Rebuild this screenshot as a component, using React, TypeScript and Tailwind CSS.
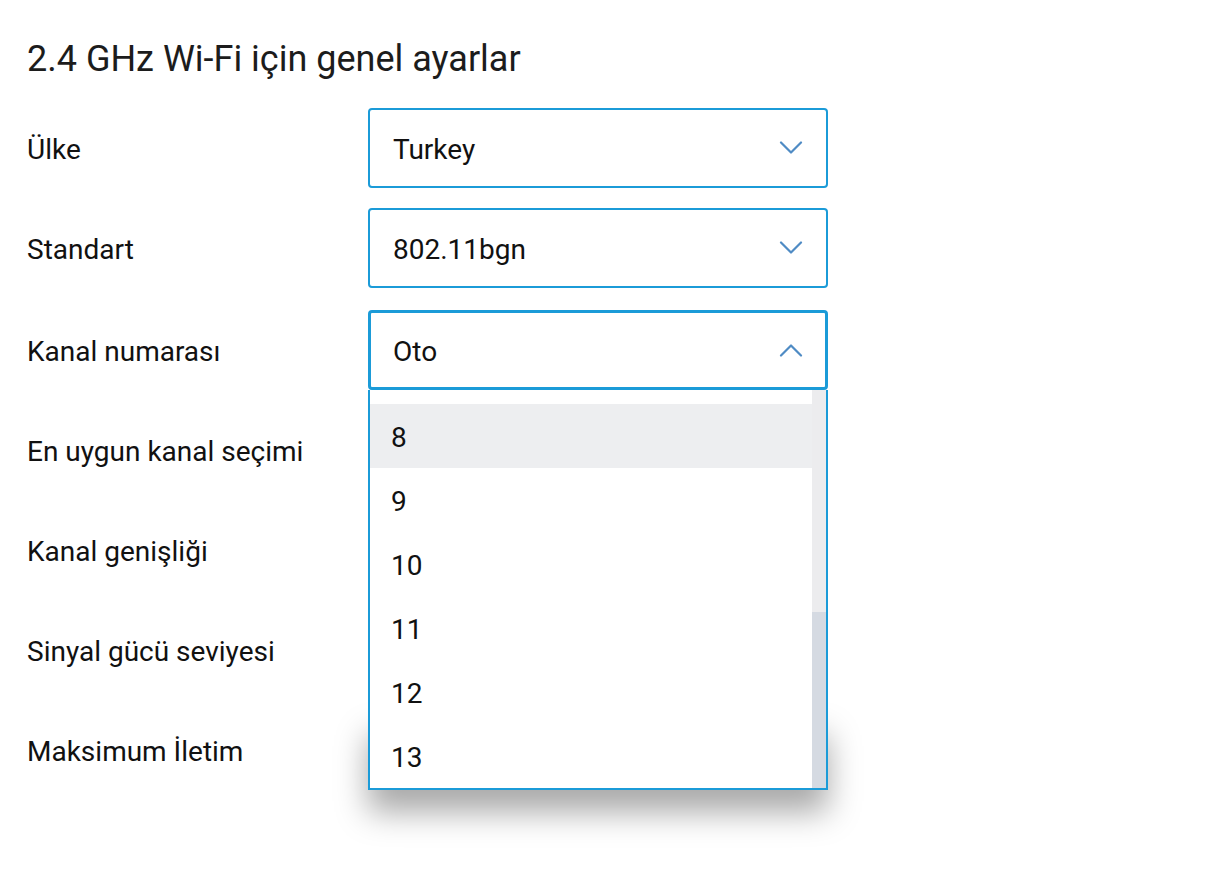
import React from 'react';

const chevronColor = '#4f8bc4';

function Chevron({ up = false }: { up?: boolean }) {
  return (
    <svg width="24" height="14" viewBox="0 0 24 14" className="shrink-0">
      <polyline
        points={up ? '2,12.5 12,2.5 22,12.5' : '2,1.5 12,11.5 22,1.5'}
        fill="none"
        stroke={chevronColor}
        strokeWidth="2.2"
        strokeLinecap="round"
        strokeLinejoin="round"
      />
    </svg>
  );
}

function Select({ value }: { value: string }) {
  return (
    <div className="w-[460px] h-[80px] border-2 border-[#1b9bd8] rounded-[4px] bg-white flex items-center justify-between pl-[23px] pr-[23px]">
      <span className="pt-[3px]">{value}</span>
      <Chevron />
    </div>
  );
}

const channels = ['8', '9', '10', '11', '12', '13'];

function OpenSelect({ value }: { value: string }) {
  return (
    <div className="relative w-[460px] h-[80px]">
      <div className="w-[460px] h-[80px] border-[3px] border-[#1b9bd8] rounded-[4px] bg-white flex items-center justify-between pl-[22px] pr-[22px]">
        <span className="pt-[3px]">{value}</span>
        <Chevron up />
      </div>

      {/* shadow under the lower part of the list */}
      <div className="absolute left-0 top-[403px] w-[460px] h-[77px] z-[5] shadow-[0_22px_32px_rgba(0,0,0,0.34)]" />

      <div className="absolute left-0 top-[80px] w-[460px] h-[400px] z-10 bg-white border-2 border-t-0 border-[#1b9bd8] flex">
        <div className="flex-1 flex flex-col">
          <div className="h-[14px]" />
          {channels.map((c, i) => (
            <div
              key={c}
              className={`h-[64px] flex items-center pl-[21px] pt-[3px] ${i === 0 ? 'bg-[#edeef0]' : 'bg-white'}`}
            >
              {c}
            </div>
          ))}
        </div>
        <div className="w-[14px] flex flex-col">
          <div className="h-[222px] bg-[#ececee]" />
          <div className="flex-1 bg-[#d5dae2]" />
        </div>
      </div>
    </div>
  );
}

export default function App() {
  const rows: { label: string; control: React.ReactNode; extraTop?: boolean }[] = [
    { label: 'Ülke', control: <Select value="Turkey" /> },
    { label: 'Standart', control: <Select value="802.11bgn" /> },
    { label: 'Kanal numarası', control: <OpenSelect value="Oto" />, extraTop: true },
    { label: 'En uygun kanal seçimi', control: <div className="w-[460px] h-[80px]" /> },
    { label: 'Kanal genişliği', control: <div className="w-[460px] h-[80px]" /> },
    { label: 'Sinyal gücü seviyesi', control: <div className="w-[460px] h-[80px]" /> },
    { label: 'Maksimum İletim', control: <div className="w-[460px] h-[80px]" /> },
  ];

  return (
    <div
      className="w-[1228px] h-[890px] bg-white text-[#111111] overflow-hidden pl-[27px] pt-[37px]"
      style={{ fontFamily: 'Roboto, "Noto Sans", sans-serif' }}
    >
      <h1 className="text-[36px] leading-[44px] font-normal text-[#1c1c1c]">
        2.4 GHz Wi-Fi için genel ayarlar
      </h1>

      <div className="mt-[27px] flex flex-col gap-[20px] text-[28px] leading-[36px]">
        {rows.map((r) => (
          <div key={r.label} className={`flex items-center h-[80px] ${r.extraTop ? 'mt-[2px]' : ''}`}>
            <div className="w-[341px] shrink-0 pt-[3px]">{r.label}</div>
            {r.control}
          </div>
        ))}
      </div>
    </div>
  );
}
